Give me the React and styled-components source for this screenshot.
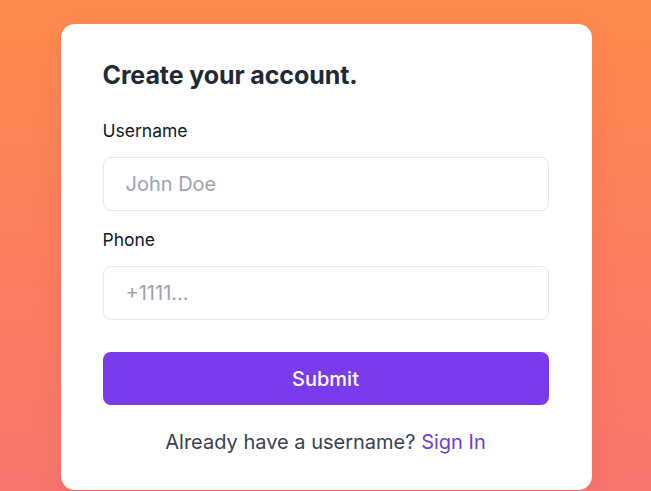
import React from 'react';
import styled, { createGlobalStyle } from 'styled-components';

const GlobalStyle = createGlobalStyle`
  html, body {
    margin: 0;
    padding: 0;
    height: 100%;
  }
  body {
    font-family: Inter, "Noto Sans", sans-serif;
    background: linear-gradient(180deg, #fd8b4d 0%, #fb7d62 60%, #f8766e 100%);
    overflow: hidden;
  }
`;

const Page = styled.main`
  width: 651px;
  height: 491px;
  display: flex;
  justify-content: center;
  padding-top: 24px;
  box-sizing: border-box;
  padding-left: 1px;
`;

const Card = styled.section`
  width: 531px;
  height: 466px;
  box-sizing: border-box;
  background: #ffffff;
  border-radius: 14px;
  padding: 35px 43px 0 42px;
  display: flex;
  flex-direction: column;
  box-shadow: 0 10px 30px rgba(180, 60, 30, 0.12);
`;

const Title = styled.h1`
  margin: 0 0 28px;
  font-size: 25px;
  line-height: 32px;
  font-weight: 700;
  color: #1f2937;
  letter-spacing: -0.1px;
`;

const Field = styled.div`
  display: flex;
  flex-direction: column;
  gap: 14px;
  margin-bottom: ${(p) => p.$gap}px;
`;

const Label = styled.label`
  font-size: 17.5px;
  line-height: 24px;
  color: #111827;
`;

const Input = styled.input`
  height: 54px;
  box-sizing: border-box;
  border: 1px solid #e5e7eb;
  border-radius: 8px;
  padding: 0 22px;
  font-family: inherit;
  font-size: 20px;
  color: #111827;
  outline: none;

  &::placeholder {
    color: #9ca3af;
  }
`;

const Button = styled.button`
  height: 53px;
  border: none;
  border-radius: 8px;
  background: #7c3aed;
  color: #ffffff;
  font-family: inherit;
  font-size: 20px;
  font-weight: 500;
  cursor: pointer;
`;

const Footer = styled.p`
  margin: 23px 0 0;
  text-align: center;
  font-size: 20px;
  line-height: 28px;
  color: #374151;
`;

const Link = styled.a`
  color: #6d3fd2;
  text-decoration: none;
`;

export default function App() {
  return (
    <>
      <GlobalStyle />
      <Page>
        <Card>
          <Title>Create your account.</Title>
          <Field $gap={17}>
            <Label htmlFor="username">Username</Label>
            <Input id="username" placeholder="John Doe" />
          </Field>
          <Field $gap={32}>
            <Label htmlFor="phone">Phone</Label>
            <Input id="phone" placeholder="+1111..." />
          </Field>
          <Button type="submit">Submit</Button>
          <Footer>
            Already have a username? <Link href="#">Sign In</Link>
          </Footer>
        </Card>
      </Page>
    </>
  );
}
